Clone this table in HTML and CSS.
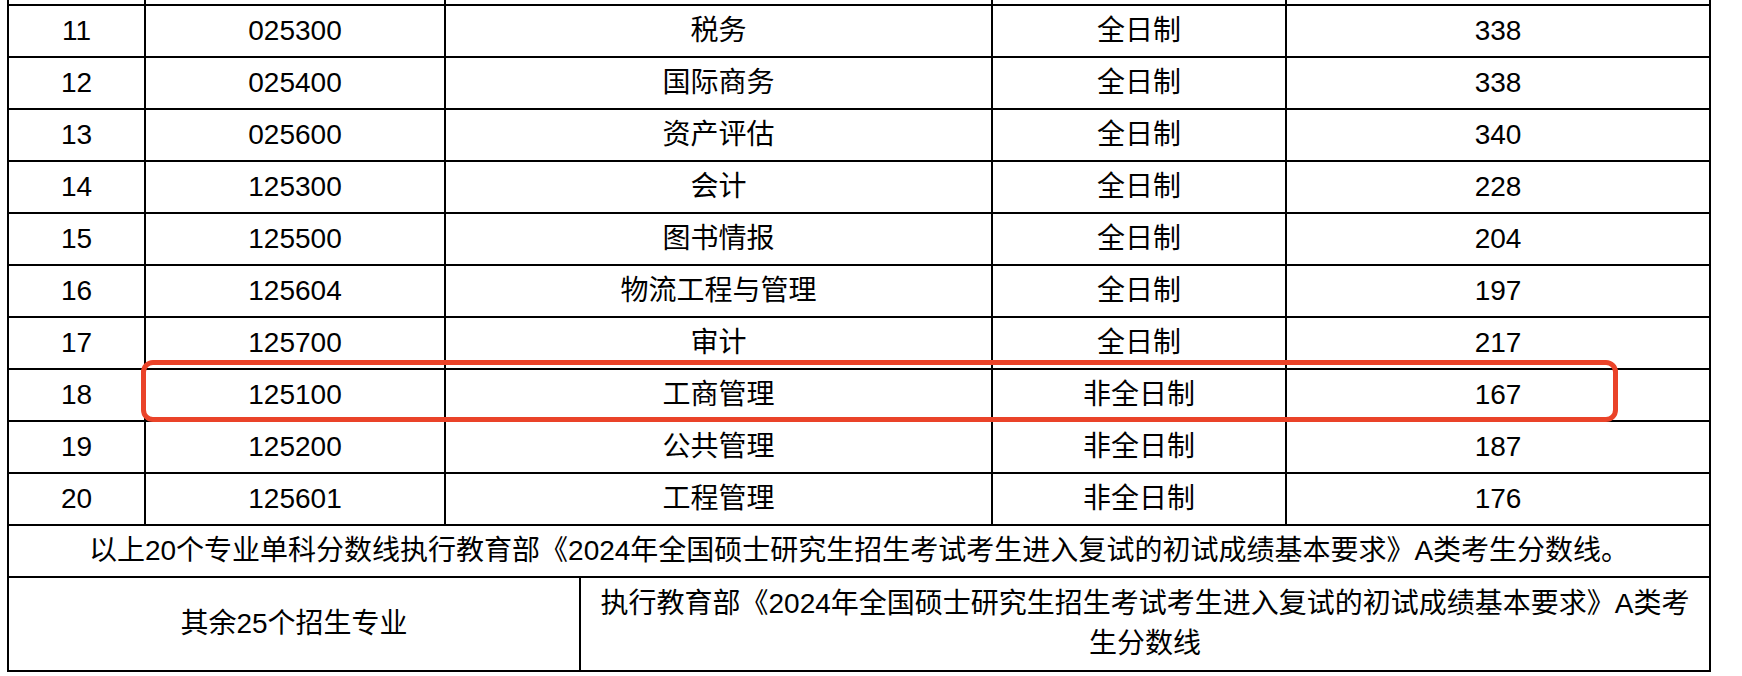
FILE: index.html
```html
<!DOCTYPE html>
<html lang="zh-CN">
<head>
<meta charset="utf-8">
<title>分数线</title>
<link rel="stylesheet" href="styles.css">
</head>
<body>
<div class="wrap">
  <table class="score">
    <colgroup>
      <col class="c1"><col class="c2"><col class="c3a"><col class="c3b"><col class="c4"><col class="c5">
    </colgroup>
    <tbody>
      <tr class="spacer"><td></td><td></td><td colspan="2"></td><td></td><td></td></tr>
      <tr><td>11</td><td>025300</td><td colspan="2">税务</td><td>全日制</td><td>338</td></tr>
      <tr><td>12</td><td>025400</td><td colspan="2">国际商务</td><td>全日制</td><td>338</td></tr>
      <tr><td>13</td><td>025600</td><td colspan="2">资产评估</td><td>全日制</td><td>340</td></tr>
      <tr><td>14</td><td>125300</td><td colspan="2">会计</td><td>全日制</td><td>228</td></tr>
      <tr><td>15</td><td>125500</td><td colspan="2">图书情报</td><td>全日制</td><td>204</td></tr>
      <tr><td>16</td><td>125604</td><td colspan="2">物流工程与管理</td><td>全日制</td><td>197</td></tr>
      <tr><td>17</td><td>125700</td><td colspan="2">审计</td><td>全日制</td><td>217</td></tr>
      <tr><td>18</td><td>125100</td><td colspan="2">工商管理</td><td>非全日制</td><td>167</td></tr>
      <tr><td>19</td><td>125200</td><td colspan="2">公共管理</td><td>非全日制</td><td>187</td></tr>
      <tr><td>20</td><td>125601</td><td colspan="2">工程管理</td><td>非全日制</td><td>176</td></tr>
      <tr><td colspan="6">以上20个专业单科分数线执行教育部《2024年全国硕士研究生招生考试考生进入复试的初试成绩基本要求》A类考生分数线。</td></tr>
      <tr class="last"><td colspan="3">其余25个招生专业</td><td colspan="3" class="multi">执行教育部《2024年全国硕士研究生招生考试考生进入复试的初试成绩基本要求》A类考<br>生分数线</td></tr>
    </tbody>
  </table>
  <div class="highlight"></div>
</div>
</body>
</html>
```

FILE: styles.css
```css
html, body {
  margin: 0;
  padding: 0;
  background: #fff;
}

body {
  font-family: "Liberation Sans", "Noto Sans CJK SC", sans-serif;
  font-size: 28px;
  color: #000;
}

.wrap {
  position: relative;
  width: 1742px;
  height: 676px;
  overflow: hidden;
}

.score {
  border-collapse: collapse;
  table-layout: fixed;
  width: 1702px;
  margin-left: 7px;
}

.c1 { width: 137px; }
.c2 { width: 300px; }
.c3a { width: 135px; }
.c3b { width: 412px; }
.c4 { width: 294px; }
.c5 { width: 424px; }

.score td {
  border: 2px solid #000;
  height: 50px;
  padding: 0;
  text-align: center;
  vertical-align: middle;
  line-height: 40px;
  white-space: nowrap;
}

.score .spacer td {
  border-top: none;
  height: 4px;
  line-height: 4px;
}

.score .last td {
  height: 78px;
  padding: 6px 8px;
}

.highlight {
  position: absolute;
  left: 141px;
  top: 360px;
  width: 1467px;
  height: 52px;
  border: 5px solid #ea4329;
  border-radius: 12px;
}
```
